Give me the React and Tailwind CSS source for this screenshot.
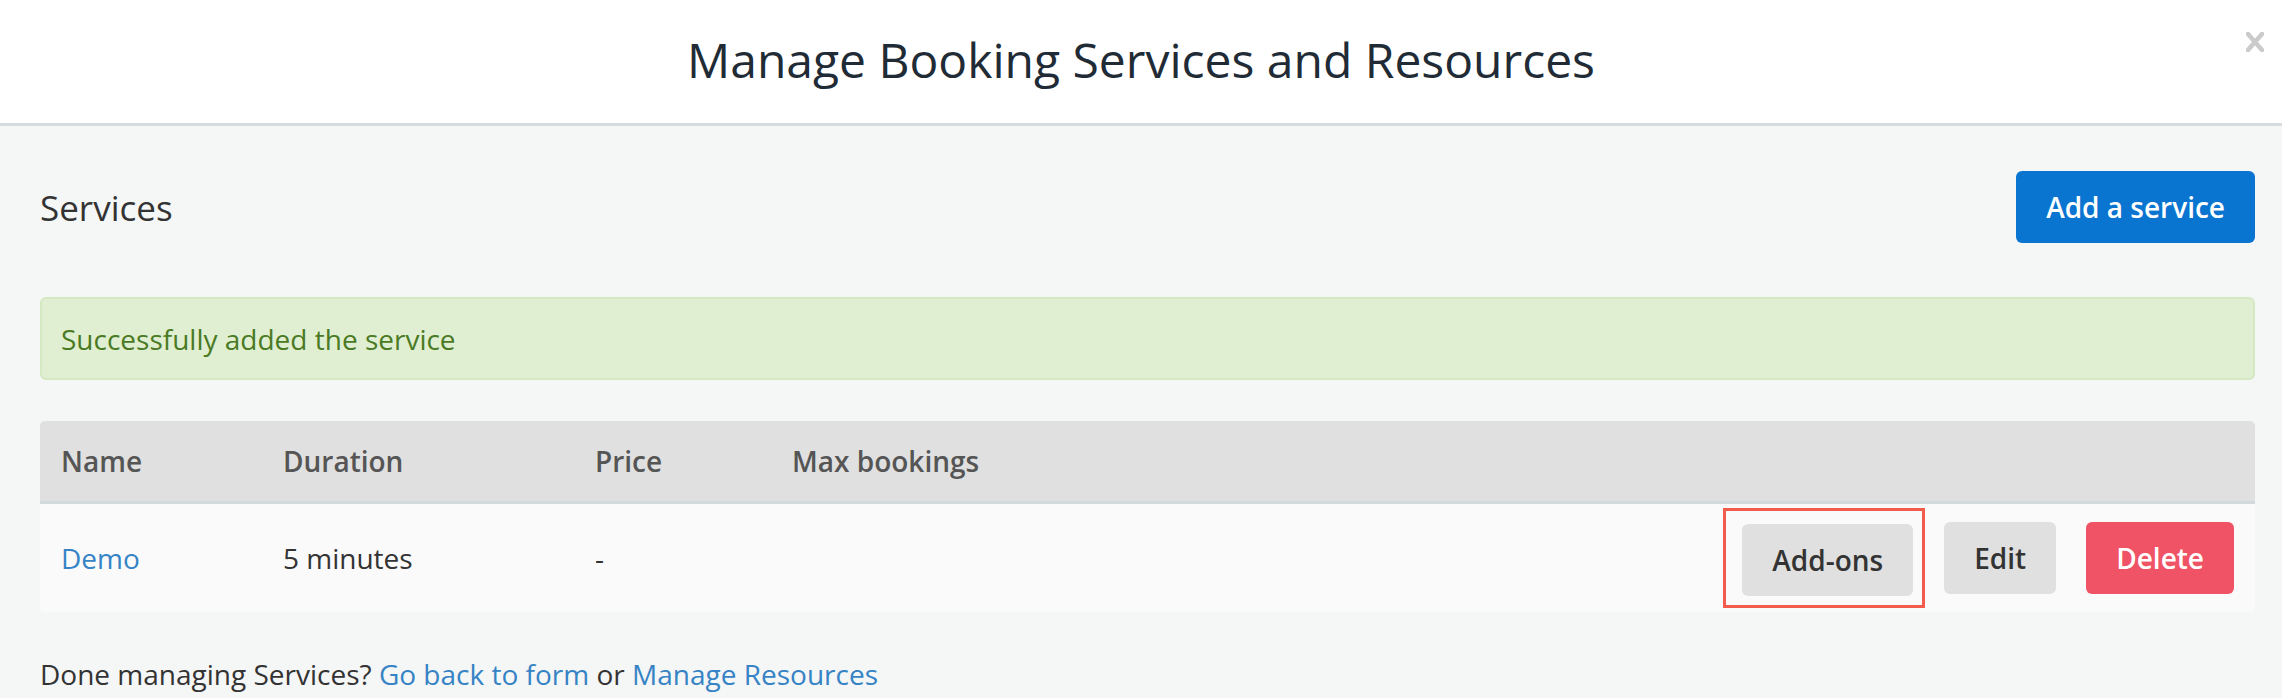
export default function App() {
  return (
    <div className="min-h-screen bg-[#f5f6f6] font-['Open_Sans',sans-serif] text-[#333]">
      {/* Modal header */}
      <header className="relative flex h-[126px] items-center justify-center border-b-[3px] border-[#d6dcde] bg-white">
        <h1 className="text-[48px] leading-none text-[#212b36] pb-[4px]">Manage Booking Services and Resources</h1>
        <button className="absolute right-[18px] top-[32px]" aria-label="Close">
          <svg width="18" height="20" viewBox="0 0 18 20">
            <path d="M2 2 L16 18 M16 2 L2 18" stroke="#cbcbcb" strokeWidth="4.5" strokeLinecap="square" />
          </svg>
        </button>
      </header>

      <main className="pl-[40px] pr-[27px] pt-[45px]">
        {/* Title row */}
        <div className="flex items-center justify-between">
          <h2 className="text-[35px] leading-none text-[#333]">Services</h2>
          <button className="h-[72px] rounded-[6px] bg-[#0a74d1] px-[30px] text-[28px] font-semibold text-white">
            Add a service
          </button>
        </div>

        {/* Alert */}
        <div className="mt-[54px] flex h-[83px] items-center rounded-[6px] border-2 border-[#d4e8c2] bg-[#e0efd1] pl-[19px] text-[28px] text-[#4b7a25]">
          Successfully added the service
        </div>

        {/* Table */}
        <div className="mt-[41px] overflow-hidden rounded-[5px]">
          <table className="w-full table-fixed border-collapse text-[28px]">
            <thead>
              <tr className="h-[81px] bg-[#e0e0e0] text-left font-semibold text-[#555]">
                <th className="w-[243px] pl-[21px] font-semibold">Name</th>
                <th className="w-[312px] font-semibold">Duration</th>
                <th className="w-[197px] font-semibold">Price</th>
                <th className="w-[400px] font-semibold">Max bookings</th>
                <th className="font-semibold"></th>
              </tr>
            </thead>
            <tbody>
              <tr className="h-[110px] border-t-[3px] border-[#d3dadd] bg-[#fafafa]">
                <td className="pl-[21px]">
                  <a className="text-[#3683c5]" href="#">Demo</a>
                </td>
                <td>5 minutes</td>
                <td>-</td>
                <td></td>
                <td className="pr-[21px]">
                  <div className="flex items-center justify-end">
                    <div className="border-[3px] border-[#f25c4c] pb-[9px] pl-[16px] pr-[9px] pt-[13px]">
                      <button className="h-[72px] rounded-[6px] bg-[#e0e0e0] px-[30px] font-semibold text-[#333]">Add-ons</button>
                    </div>
                    <button className="ml-[19px] h-[72px] rounded-[6px] bg-[#e0e0e0] px-[30px] font-semibold text-[#333]">Edit</button>
                    <button className="ml-[30px] h-[72px] rounded-[6px] bg-[#f05366] px-[30px] font-semibold text-white">Delete</button>
                  </div>
                </td>
              </tr>
            </tbody>
          </table>
        </div>

        {/* Footer */}
        <p className="mt-[41px] text-[28px]">
          Done managing Services? <a className="text-[#3683c5]" href="#">Go back to form</a> or{" "}
          <a className="text-[#3683c5]" href="#">Manage Resources</a>
        </p>
      </main>
    </div>
  );
}
